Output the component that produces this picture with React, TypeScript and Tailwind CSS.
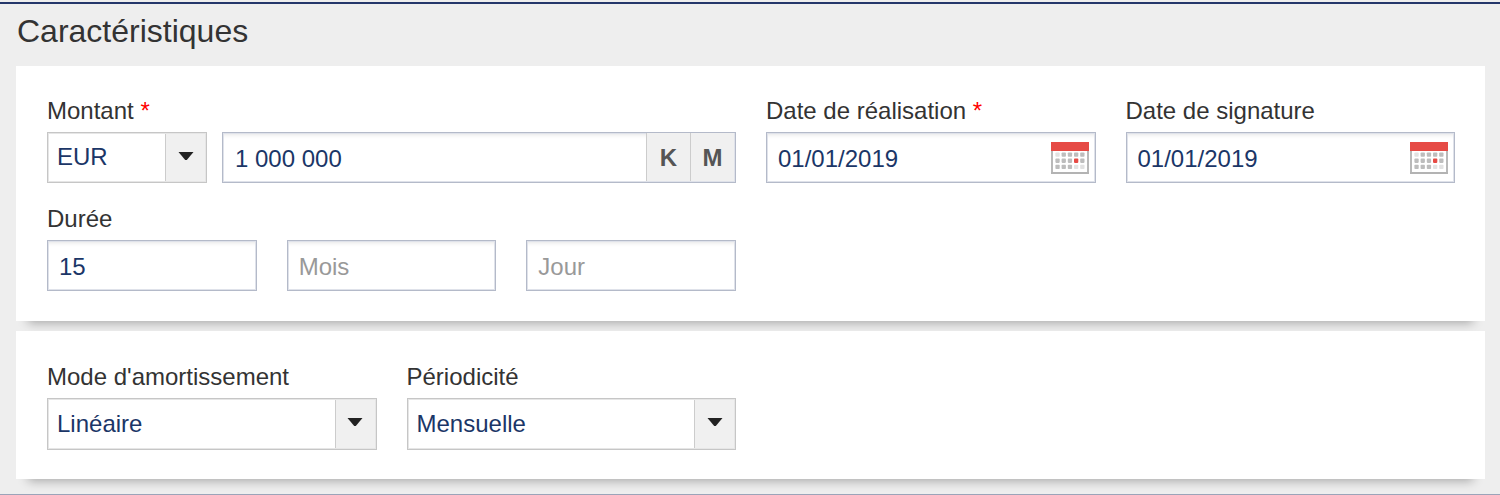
import { useId, useState } from "react";
import type { ReactNode } from "react";

const inputClass =
  "block h-[51px] w-full min-w-0 border border-[#b4bac9] bg-white px-[11px] pt-[3px] text-2xl text-[#1b3667] shadow-[inset_0_0_0_1px_#dfe2ea,inset_0_5px_4px_-3px_#e6e6e6] outline-none placeholder:text-[#999]";

function Label({ htmlFor, required, children }: { htmlFor: string; required?: boolean; children: ReactNode }) {
  return (
    <label htmlFor={htmlFor} className="mb-1.5 block text-2xl leading-[30px] text-[#333]">
      {children}
      {required && <span className="text-[#f00]"> *</span>}
    </label>
  );
}

function Select({ id, options, label, className }: { id: string; options: string[]; label?: string; className: string }) {
  return (
    <div className={`relative ${className}`}>
      <select
        id={id}
        aria-label={label}
        className="block h-full w-full appearance-none border border-[#c6c6c6] bg-white pr-10 pb-px pl-[9px] text-2xl text-[#1b3667] shadow-[inset_0_0_0_1px_#e6e6e6] outline-none"
      >
        {options.map((option) => (
          <option key={option}>{option}</option>
        ))}
      </select>
      <span className="pointer-events-none absolute inset-y-0.5 right-0.5 flex w-10 items-center justify-center border-l border-[#ccc] bg-[#f0f0f0]">
        <svg width="16" height="10" viewBox="0 0 16 10" className="mb-1" aria-hidden="true">
          <path d="M.5 1h15L8.8 9H7.2Z" fill="#222" />
        </svg>
      </span>
    </div>
  );
}

const DAY_COLORS: Record<string, string> = { l: "#e2e2e2", d: "#bdbdbd", r: "#e64a45" };
const WEEKS = ["ldddd", "dddrd", "dddll"];

function CalendarIcon() {
  return (
    <svg width="38" height="34" viewBox="0 0 38 34" aria-hidden="true">
      <path d="M1 9v23h36V9" fill="#fff" stroke="#b9b9b9" strokeWidth="2" />
      <path d="M0 32h38" stroke="#b3b3b3" strokeWidth="2" />
      <rect width="38" height="9" y="1" fill="#e64a45" />
      {WEEKS.map((week, y) =>
        week.split("").map((day, x) => (
          <rect key={`${x}-${y}`} x={4.4 + x * 6.2} y={11.4 + y * 6.2} width="4.3" height="4.3" rx=".8" fill={DAY_COLORS[day]} />
        ))
      )}
    </svg>
  );
}

function DateField({ label, required }: { label: string; required?: boolean }) {
  const id = useId();
  return (
    <div>
      <Label htmlFor={id} required={required}>{label}</Label>
      <div className="relative">
        <input id={id} type="text" defaultValue="01/01/2019" className={inputClass} />
        <button type="button" aria-label="Calendrier" className="absolute inset-y-0 right-[7px] flex items-center">
          <CalendarIcon />
        </button>
      </div>
    </div>
  );
}

function SelectField({ label, options }: { label: string; options: string[] }) {
  const id = useId();
  return (
    <div>
      <Label htmlFor={id}>{label}</Label>
      <Select id={id} options={options} className="h-[52px]" />
    </div>
  );
}

function AmountField() {
  const [amount, setAmount] = useState("1 000 000");
  const unit = "w-11 border-l border-[#ccc] bg-[#f0f0f0] pt-px text-2xl font-bold text-[#555]";
  return (
    <div className="col-span-2">
      <Label htmlFor="amount" required>Montant</Label>
      <div className="flex gap-[15px]">
        <Select id="currency" label="Devise" options={["EUR", "USD", "GBP"]} className="h-[51px] w-40 shrink-0" />
        <div className="flex h-[51px] min-w-0 flex-1 border border-[#b4bac9] bg-white pr-px pb-px shadow-[inset_0_0_0_1px_#dfe2ea,inset_0_5px_4px_-3px_#e6e6e6]">
          <input
            id="amount"
            type="text"
            value={amount}
            onChange={(e) => setAmount(e.target.value)}
            className="min-w-0 flex-1 bg-transparent px-3 pt-[3px] text-2xl text-[#1b3667] outline-none"
          />
          <button type="button" className={unit} onClick={() => setAmount(`${amount} 000`)}>K</button>
          <button type="button" className={unit} onClick={() => setAmount(`${amount} 000 000`)}>M</button>
        </div>
      </div>
    </div>
  );
}

const panelClass =
  "relative grid grid-cols-4 gap-x-[30px] gap-y-[21px] bg-white pr-[30px] pl-[31px] shadow-[0_14px_10px_-12px_rgba(0,0,0,0.3)]";

export default function App() {
  return (
    <main className="border-b border-[#9ba4b9] bg-[#eee] pb-[15px] font-['Liberation_Sans',Arial,sans-serif]">
      <div className="h-1 border-b-2 border-[#24366a]" />
      <h1 className="mb-2 px-[17px] text-[32px] leading-[54px] text-[#333]">Caractéristiques</h1>
      <form className="mr-[15px] ml-4 flex flex-col gap-2.5">
        <section className={`${panelClass} py-[30px]`}>
          <AmountField />
          <DateField label="Date de réalisation" required />
          <DateField label="Date de signature" />
          <div className="col-span-2">
            <Label htmlFor="years">Durée</Label>
            <div className="grid grid-cols-3 gap-x-[30px]">
              <input id="years" type="text" aria-label="Années" defaultValue="15" className={inputClass} />
              <input type="text" aria-label="Mois" placeholder="Mois" className={inputClass} />
              <input type="text" aria-label="Jour" placeholder="Jour" className={inputClass} />
            </div>
          </div>
        </section>
        <section className={`${panelClass} pt-[31px] pb-[29px]`}>
          <SelectField label="Mode d'amortissement" options={["Linéaire", "Progressif", "In fine"]} />
          <SelectField label="Périodicité" options={["Mensuelle", "Trimestrielle", "Annuelle"]} />
        </section>
      </form>
    </main>
  );
}
